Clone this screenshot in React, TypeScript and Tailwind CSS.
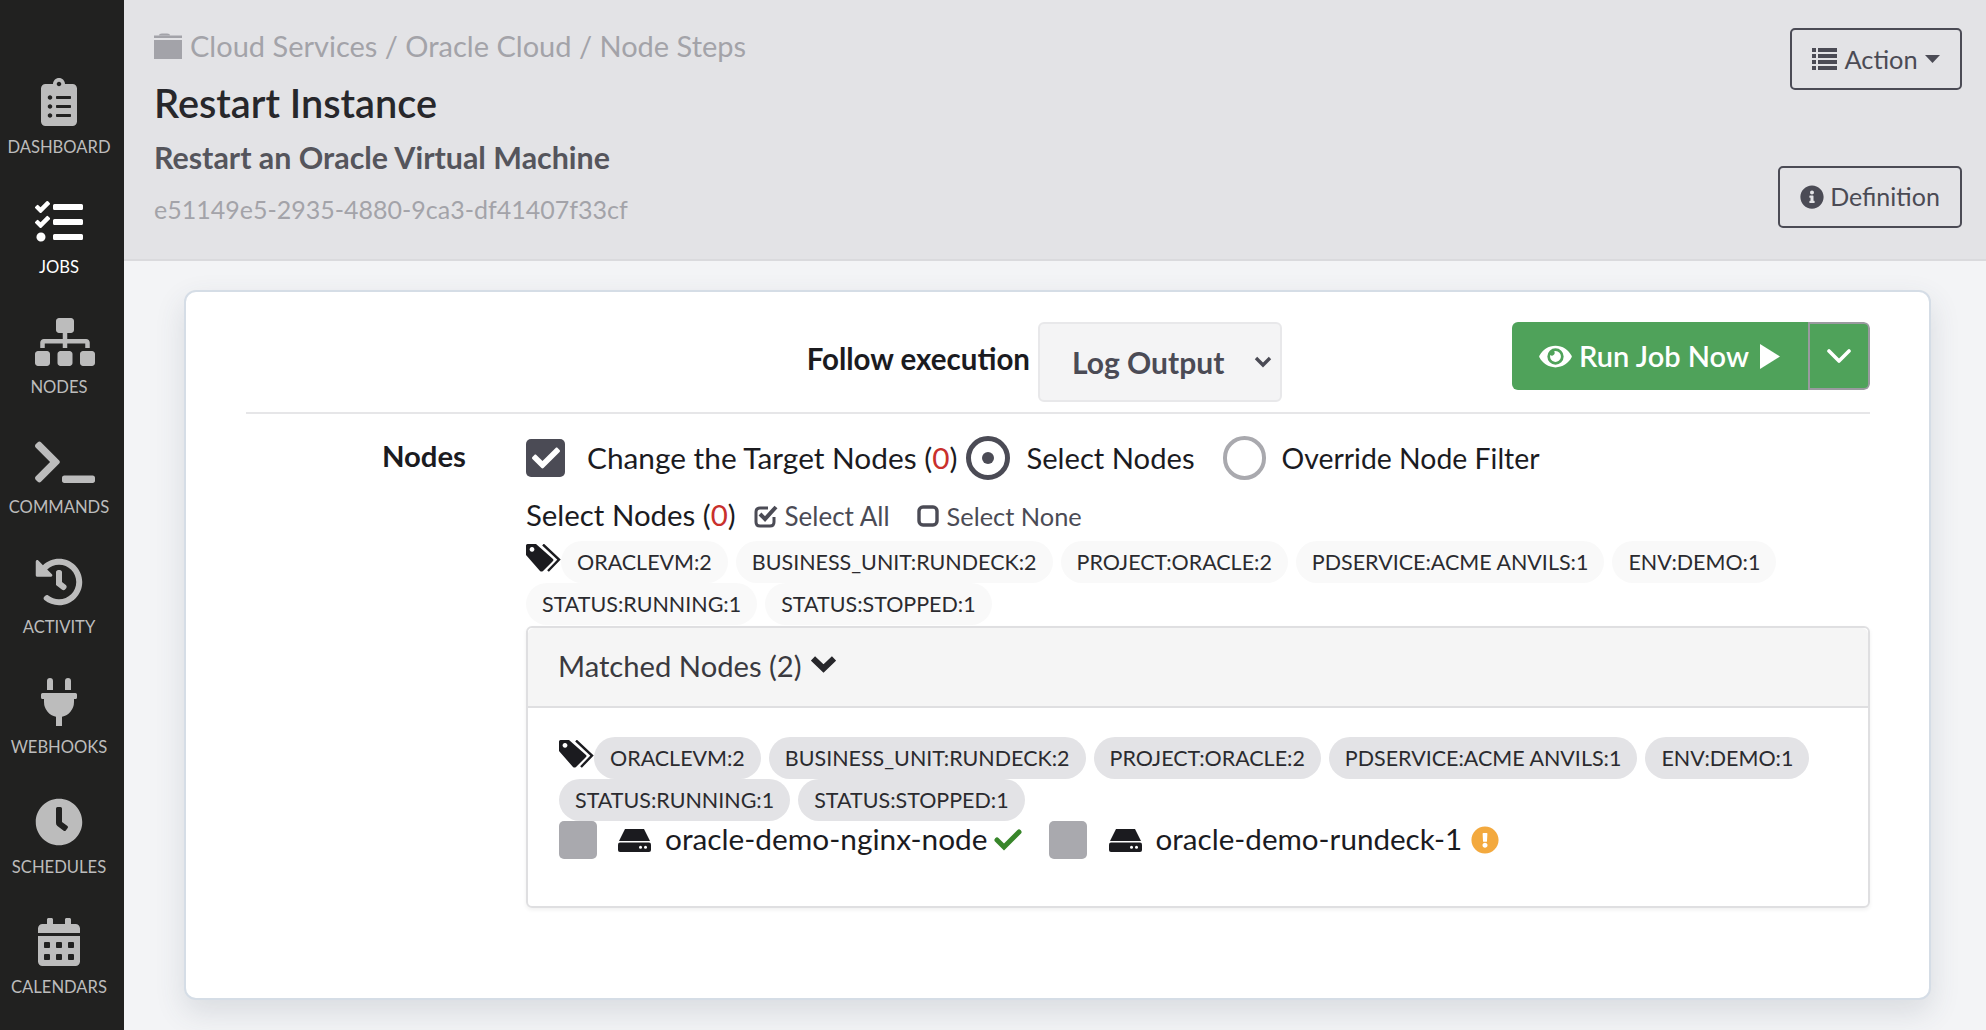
import React from "react";
import {
  FaClipboardList, FaTasks, FaSitemap, FaTerminal, FaHistory, FaPlug, FaClock, FaCalendarAlt,
  FaInfoCircle, FaEye, FaCheck, FaExclamationCircle,
} from "react-icons/fa";

const nav = [
  { label: "DASHBOARD", Icon: FaClipboardList, w: 36 },
  { label: "JOBS", Icon: FaTasks, w: 48, active: true },
  { label: "NODES", Icon: FaSitemap, w: 60 },
  { label: "COMMANDS", Icon: FaTerminal, w: 60 },
  { label: "ACTIVITY", Icon: FaHistory, w: 48 },
  { label: "WEBHOOKS", Icon: FaPlug, w: 36 },
  { label: "SCHEDULES", Icon: FaClock, w: 48 },
  { label: "CALENDARS", Icon: FaCalendarAlt, w: 42 },
];

const tags = ["ORACLEVM:2", "BUSINESS_UNIT:RUNDECK:2", "PROJECT:ORACLE:2", "PDSERVICE:ACME ANVILS:1", "ENV:DEMO:1", "STATUS:RUNNING:1", "STATUS:STOPPED:1"];

function Pill({ text, dark }: { text: string; dark?: boolean }) {
  return (
    <span className={`h-[42px] rounded-[21px] px-[16px] mr-[8px] flex items-center text-[21.47px] text-[#2b2b2f] whitespace-nowrap ${dark ? "bg-[#e3e3e6]" : "bg-[#f9f9f9]"}`}>
      {text}
    </span>
  );
}

function TagsIcon({ className }: { className: string }) {
  return (
    <svg viewBox="0 0 35 28" className={className}>
      <path fill="#1b1b1f" fillRule="evenodd" d="M1.5 0 H10 L27 15 Q28 16 27 17 L17 27 Q15.5 28 14 27 L0 11 V1.5 Q0 0 1.5 0 Z M6 3 a2.4 2.4 0 1 0 0.01 0 Z" />
      <path fill="none" stroke="#1b1b1f" strokeWidth="2.4" d="M17 0.5 L33 15.5 L22 27" />
    </svg>
  );
}

function TagRows({ dark }: { dark?: boolean }) {
  return (
    <div className="flex flex-wrap items-start">
      <TagsIcon className="w-[35px] h-[28px] mt-[3px]" />
      {tags.map((t) => <Pill key={t} text={t} dark={dark} />)}
    </div>
  );
}

function Hdd({ className }: { className: string }) {
  return (
    <svg viewBox="0 0 33 23" className={className}>
      <path fill="#1b1b1f" d="M7 0 H26 L32 12 H1 Z" />
      <rect x="0" y="13.5" width="33" height="9.5" rx="2" fill="#1b1b1f" />
      <circle cx="22.5" cy="18.2" r="1.5" fill="#fff" />
      <circle cx="27.5" cy="18.2" r="1.5" fill="#fff" />
    </svg>
  );
}

export default function App() {
  return (
    <div className="flex w-[1986px] h-[1030px] overflow-hidden font-['Lato',sans-serif] bg-[#f3f4f6] text-[#1b1b1f]">
      <aside className="w-[124px] shrink-0 bg-[#212120] pt-[78px] pr-[6px] flex flex-col">
        {nav.map(({ label, Icon, w, active }) => (
          <div key={label} className={`h-[120px] shrink-0 flex flex-col items-center ${active ? "text-white" : "text-[#bcbcbc]"}`}>
            <div className={`w-[48px] h-[48px] flex items-center ${w === 60 ? "justify-start" : "justify-center"}`}>
              <Icon className="shrink-0" style={{ width: w, height: 48 }} />
            </div>
            <span className="mt-[10px] text-[16.6px] leading-[22px] whitespace-nowrap">{label}</span>
          </div>
        ))}
      </aside>

      <main className="flex-1 min-w-0 flex flex-col">
        <header className="h-[261px] shrink-0 bg-[#e3e3e6] border-b-2 border-[#dadadd] pl-[30px] pr-[24px] flex justify-between">
          <div className="flex flex-col">
            <div className="mt-[27px] h-[38px] flex items-center text-[#a3a3a9] text-[29px]">
              <svg viewBox="0 0 28 26" className="w-[28px] h-[26px] mr-[8px]" fill="#a3a3a9">
                <path d="M5 2.5 Q5 0.5 8 0.5 H13 Q16 0.5 16 2.5 Z" />
                <rect x="0" y="2.5" width="28" height="2.5" />
                <rect x="0" y="7" width="28" height="19" />
              </svg>
              <span>Cloud Services / Oracle Cloud / Node Steps</span>
            </div>
            <h1 className="mt-[17px] h-[42px] flex items-center text-[39.7px] font-semibold text-[#27272b]">Restart Instance</h1>
            <h2 className="mt-[14px] h-[40px] flex items-center text-[30.4px] font-bold text-[#55555c]">Restart an Oracle Virtual Machine</h2>
            <div className="mt-[17px] h-[30px] flex items-center text-[25px] text-[#a3a3a9]">e51149e5-2935-4880-9ca3-df41407f33cf</div>
          </div>
          <div className="flex flex-col items-end pt-[28px]">
            <button className="h-[62px] w-[172px] border-2 border-[#4b4b55] rounded-[5px] flex items-center justify-center gap-[7px] text-[25.4px] text-[#4b4b55]">
              <svg viewBox="0 0 25 22" className="w-[25px] h-[22px]" fill="#4b4b55">
                <rect x="0" y="0" width="4" height="4" /><rect x="6" y="0" width="19" height="4" />
                <rect x="0" y="6" width="4" height="4" /><rect x="6" y="6" width="19" height="4" />
                <rect x="0" y="12" width="4" height="4" /><rect x="6" y="12" width="19" height="4" />
                <rect x="0" y="18" width="4" height="4" /><rect x="6" y="18" width="19" height="4" />
              </svg>
              <span>Action</span>
              <svg viewBox="0 0 15 8" className="w-[15px] h-[8px]" fill="#4b4b55"><polygon points="0,0 15,0 7.5,8" /></svg>
            </button>
            <button className="mt-[76px] h-[62px] w-[184px] border-2 border-[#4b4b55] rounded-[5px] flex items-center justify-center gap-[6px] text-[25px] text-[#4b4b55]">
              <FaInfoCircle className="w-[24px] h-[24px]" /><span>Definition</span>
            </button>
          </div>
        </header>

        <div className="pt-[29px] pl-[60px] pr-[55px]">
          <section className="h-[710px] bg-white rounded-[12px] border-2 border-[#d5dde6] shadow-[0_12px_30px_rgba(60,70,90,0.14)] pt-[30px] pl-[60px] pr-[59px]">
            <div className="h-[92px] border-b-2 border-[#e6e6e8] flex justify-end items-start">
              <span className="mt-[18px] mr-[8px] text-[29.5px] font-bold leading-[38px] whitespace-nowrap">Follow execution</span>
              <div className="w-[244px] h-[80px] rounded-[6px] border-2 border-[#e8e8ea] bg-[#f4f4f5] flex items-center justify-between pl-[32px] pr-[8px] text-[#4b4b55] text-[30px] font-bold">
                <span>Log Output</span>
                <svg viewBox="0 0 18 12" className="w-[18px] h-[12px]" fill="none" stroke="#4b4b55" strokeWidth="3.4"><polyline points="2,2 9,9 16,2" /></svg>
              </div>
              <div className="ml-[230px] flex h-[68px] rounded-[6px] overflow-hidden text-white">
                <button className="w-[296px] bg-[#4fa25a] pr-[1px] flex items-center justify-center gap-[7px] text-[29px] font-semibold">
                  <FaEye className="w-[33px] h-[29px]" />
                  <span>Run Job Now</span>
                  <svg viewBox="0 0 20 25" className="ml-[4px] w-[20px] h-[25px]" fill="#fff"><polygon points="0,0 20,12.5 0,25" /></svg>
                </button>
                <button className="w-[62px] bg-[#4fa25a] border-2 border-[#9a9a9f] rounded-r-[6px] flex items-center justify-center">
                  <svg viewBox="0 0 24 15" className="w-[24px] h-[15px]" fill="none" stroke="#fff" strokeWidth="3.6" strokeLinecap="round" strokeLinejoin="round"><polyline points="2,2 12,12 22,2" /></svg>
                </button>
              </div>
            </div>

            <div className="flex">
              <div className="w-[220px] shrink-0 text-right pt-[23px] text-[29.3px] font-bold leading-[38px]">Nodes</div>
              <div className="ml-[60px] flex-1 min-w-0 pt-[24px]">
                <div className="flex items-center h-[40px]">
                  <span className="w-[39px] h-[38px] rounded-[5px] bg-[#4b4b55] flex items-center justify-center text-white">
                    <FaCheck className="w-[28px] h-[28px]" />
                  </span>
                  <span className="ml-[22px] text-[29.8px] whitespace-nowrap">Change the Target Nodes (<span className="text-[#c9302c]">0</span>)</span>
                  <span className="ml-[9px] w-[44px] h-[44px] rounded-full border-[5px] border-[#4b4b55] flex items-center justify-center">
                    <span className="w-[12px] h-[12px] rounded-full bg-[#4b4b55]" />
                  </span>
                  <span className="ml-[16px] text-[29.2px] whitespace-nowrap">Select Nodes</span>
                  <span className="ml-[28px] w-[43px] h-[44px] rounded-full border-[4px] border-[#a9a9ae]" />
                  <span className="ml-[16px] text-[28.4px] whitespace-nowrap">Override Node Filter</span>
                </div>
                <div className="flex items-center h-[36px] mt-[19px]">
                  <span className="text-[29.4px] whitespace-nowrap">Select Nodes (<span className="text-[#c9302c]">0</span>)</span>
                  <svg viewBox="0 0 24 24" className="ml-[18px] mt-[2px] w-[24px] h-[24px]" fill="none" stroke="#4b4b55">
                    <path strokeWidth="3" d="M20 13 V18 Q20 22 16 22 H6 Q2 22 2 18 V8 Q2 4 6 4 H14" />
                    <polyline strokeWidth="4" points="6,10 11,15 22,3" />
                  </svg>
                  <span className="ml-[7px] mt-[2px] text-[26px] text-[#4b4b55]">Select All</span>
                  <svg viewBox="0 0 22 22" className="ml-[27px] mt-[2px] w-[22px] h-[22px]" fill="none" stroke="#4b4b55"><rect x="2" y="2" width="18" height="18" rx="4" strokeWidth="3.4" /></svg>
                  <span className="ml-[8px] mt-[2px] text-[25.4px] text-[#4b4b55]">Select None</span>
                </div>
                <div className="mt-[8px]"><TagRows /></div>
                <div className="mt-[1px] h-[282px] border-2 border-[#dfdfe1] rounded-[6px] shadow-[0_2px_4px_rgba(0,0,0,0.06)]">
                  <div className="h-[80px] bg-[#f5f5f5] border-b-2 border-[#dfdfe1] pl-[30px] pb-[2px] flex items-center text-[29.2px] text-[#3a3a40] rounded-t-[6px]">
                    <span>Matched Nodes (2)</span>
                    <svg viewBox="0 0 25 17" className="ml-[9px] -mt-[4px] w-[25px] h-[17px]" fill="none" stroke="#27272b" strokeWidth="6"><polyline points="2,2.5 12.5,12.5 23,2.5" /></svg>
                  </div>
                  <div className="pt-[29px] pl-[31px] pr-[40px]">
                    <TagRows dark />
                    <div className="flex items-center h-[38px]">
                      <span className="w-[38px] h-[38px] rounded-[5px] bg-[#a9a9ae]" />
                      <Hdd className="ml-[21px] w-[33px] h-[23px]" />
                      <span className="ml-[14px] pb-[2px] text-[29.8px] whitespace-nowrap">oracle-demo-nginx-node</span>
                      <svg viewBox="0 0 28 22" className="ml-[6px] w-[28px] h-[22px]" fill="none" stroke="#38862a" strokeWidth="5" strokeLinecap="round"><polyline points="3,11 10,18 25,3" /></svg>
                      <span className="ml-[27px] w-[38px] h-[38px] rounded-[5px] bg-[#a9a9ae]" />
                      <Hdd className="ml-[22px] w-[33px] h-[23px]" />
                      <span className="ml-[14px] pb-[2px] text-[29.6px] whitespace-nowrap">oracle-demo-rundeck-1</span>
                      <FaExclamationCircle className="ml-[9px] w-[28px] h-[28px] text-[#f3a93e]" />
                    </div>
                  </div>
                </div>
              </div>
            </div>
          </section>
        </div>
      </main>
    </div>
  );
}
